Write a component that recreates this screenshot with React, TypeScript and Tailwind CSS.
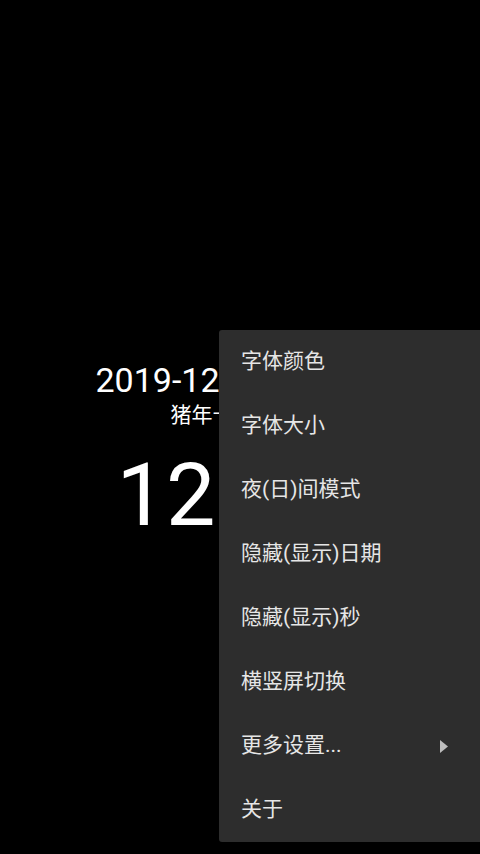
const items = [
  '字体颜色',
  '字体大小',
  '夜(日)间模式',
  '隐藏(显示)日期',
  '隐藏(显示)秒',
  '横竖屏切换',
  '更多设置...',
  '关于',
];

export default function App() {
  return (
    <div
      className="relative w-[480px] h-[854px] bg-black overflow-hidden text-white"
      style={{ fontFamily: 'Roboto, "Noto Sans CJK SC", sans-serif' }}
    >
      {/* Clock (partly covered by the popup menu) */}
      <div className="flex flex-col items-center pt-[357px]">
        <div className="text-[34px] leading-[46px] pr-[7px]">2019-12-05 星期四</div>
        <div className="text-[21px] leading-[28px] mt-[-2px] pl-[8px]">猪年十一月初十</div>
        <div className="text-[88px] leading-[100px] mt-[16px] pr-[28px]">12:08</div>
      </div>

      {/* Popup menu */}
      <div className="absolute left-[219px] top-[330px] w-[263px] bg-[#2d2d2d] rounded-[3px] shadow-lg">
        {items.map((label, i) => (
          <div key={i} className="h-[64px] flex items-center justify-between pl-[22px] pr-[33px]">
            <span className="text-[21px] text-[#e6e6e6]">{label}</span>
            {i === 6 && (
              <svg width="9" height="13" viewBox="0 0 9 13">
                <path d="M0 0 L8 6.5 L0 13 Z" fill="#bdbdbd" />
              </svg>
            )}
          </div>
        ))}
      </div>
    </div>
  );
}
